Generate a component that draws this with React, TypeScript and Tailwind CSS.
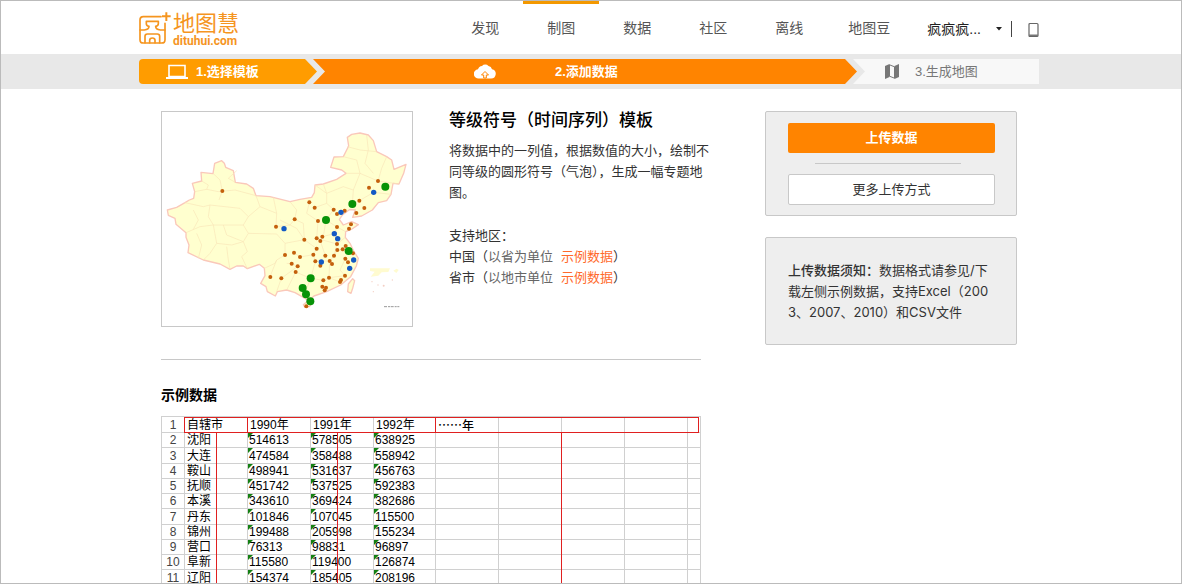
import React from "react";
import {clsx} from "clsx";

const NAV = ["发现", "制图", "数据", "社区", "离线"];

const YEARS = ["1990年", "1991年", "1992年", "……年", "", "", "", ""];

const ROWS = [
  ["沈阳", "514613", "578505", "638925"],
  ["大连", "474584", "358488", "558942"],
  ["鞍山", "498941", "531637", "456763"],
  ["抚顺", "451742", "537525", "592383"],
  ["本溪", "343610", "369424", "382686"],
  ["丹东", "101846", "107045", "115500"],
  ["锦州", "199488", "205998", "155234"],
  ["营口", "76313", "98831", "96897"],
  ["阜新", "115580", "119400", "126874"],
  ["辽阳", "154374", "185405", "208196"],
];

const SMALL_DOTS = [
  [187, 243], [448, 277], [464, 293], [404, 328], [348, 350], [474, 333], [521, 299], [531, 312],
  [554, 302], [598, 272], [613, 294], [589, 309], [627, 233], [654, 213], [573, 343], [567, 356],
  [531, 351], [433, 389], [470, 385], [487, 380], [481, 393], [470, 416], [531, 402], [532, 420],
  [548, 418], [557, 408], [579, 430], [375, 435], [402, 428], [420, 441], [460, 434], [496, 437],
  [522, 437], [466, 454], [509, 453], [516, 462], [481, 467], [556, 446], [564, 457], [395, 461],
  [413, 469], [407, 486], [331, 501], [364, 505], [507, 503], [490, 511], [555, 497], [543, 510],
  [540, 516], [487, 530], [498, 533], [494, 541], [439, 589],
];

const MEDIUM_DOTS = [
  [641, 247], [543, 307], [372, 356], [523, 371], [533, 386], [484, 456], [581, 450], [569, 475],
];

const LARGE_DOTS = [
  [676, 230], [577, 282], [498, 330], [566, 423], [452, 505], [428, 534], [438, 553], [451, 574],
];

function Logo() {
  return (
    <a aria-label="地图慧" className="flex items-start text-[#f5951f]" href="#">
      <svg className="mt-[11px] h-[33px] w-8" fill="none" viewBox="0 0 96 99">
        <g stroke="currentColor" strokeLinecap="round" strokeLinejoin="round" strokeWidth="5">
          <path d="M66 14H13Q3 14 3 24V83Q3 93 13 93H68Q78 93 78 83V34" />
          <path d="M3 54H16Q30 53 30 43Q22 41 22 35V28H58V35Q58 41 50 43Q50 53 64 54H78" />
          <path d="M18 92V73Q18 66 25 66H55Q62 66 62 73V92" />
          <path d="M32 92V85Q32 78 40 78Q48 78 48 85V92" />
        </g>
        <path d="M82 1V27M69 13H95" stroke="currentColor" strokeWidth="6" />
      </svg>
      <span className="mt-[11px] ml-0.5 flex flex-col">
        <span className="text-[22px] leading-[23px]">地图慧</span>
        <span className="font-[Roboto] text-xs leading-3 font-bold">dituhui.com</span>
      </span>
    </a>
  );
}

function Header() {
  return (
    <header className="mx-auto flex h-[53px] max-w-[900px] items-start justify-between">
      <Logo />
      <nav className="flex text-sm text-[#555]">
        {NAV.map((item) => (
          <a
            key={item}
            className={clsx(
              "h-[53px] w-[76px] border-t-3 text-center leading-12",
              item === "制图" ? "border-[#f39800]" : "border-transparent",
            )}
            href="#"
          >
            {item}
          </a>
        ))}
        <a className="w-[84px] border-t-3 border-transparent text-center leading-12" href="#">
          地图豆
        </a>
        <button
          className="ml-4 flex items-center border-t-3 border-transparent leading-12 text-[#222]"
          type="button"
        >
          疯疯疯...
          <svg className="ml-3.5 h-1 w-2" viewBox="0 0 8 4">
            <path d="M1 0h6L4 3.5z" fill="#222" />
          </svg>
        </button>
        <span className="mt-5 ml-2 h-4 w-px bg-[#444]" />
        <a aria-label="手机版" className="mt-[21px] ml-4" href="#">
          <svg className="h-4 w-[11px]" viewBox="0 0 11 16">
            <path
              d="M2 1.500h7q1 0 1 1v11q0 1-1 1H2q-1 0-1-1v-11q0-1 1-1z"
              fill="none"
              stroke="#666"
              strokeWidth="1.2"
            />
            <path d="M1 12.500h9v1.500H1z" fill="#777" />
          </svg>
        </a>
      </nav>
    </header>
  );
}

function Steps() {
  return (
    <div className="bg-[#e8e8e8] py-[5px] pr-1">
      <ol className="mx-auto flex h-[25px] max-w-[900px] text-[13px]">
        <li className="flex w-[178px] items-center gap-2 rounded-l-sm bg-[#ff9c00] pl-[27px] font-bold text-white [clip-path:polygon(0_0,calc(100%-12px)_0,100%_50%,calc(100%-12px)_100%,0_100%)]">
          <svg className="h-4 w-[22px]" viewBox="0 0 22 16">
            <path d="M3 1.5h16v11H3z" fill="none" stroke="#fff" strokeWidth="1.6" />
            <path d="M0 13h22v2H0z" fill="#fff" />
          </svg>
          1.选择模板
        </li>
        <li className="-ml-1 flex flex-1 items-center gap-[59px] bg-[#ff8400] pl-[161px] font-bold text-white [clip-path:polygon(0_0,calc(100%-12px)_0,100%_50%,calc(100%-12px)_100%,0_100%,12px_50%)]">
          <svg className="h-4 w-[22px]" viewBox="0 0 22 16">
            <path
              d="M5 14.500A4.500 4.500 0 0 1 4 5.200A4.500 4.500 0 0 1 8 2A4.500 4.500 0 0 1 14.500 2A4.300 4.300 0 0 1 18 5.200A4.700 4.700 0 0 1 17 14.500z"
              fill="#fff"
            />
            <path
              d="M11 7.500l3.500 3.500h-2.200V14H9.700v-3H7.500z"
              fill="none"
              stroke="#ff8400"
              strokeWidth="1"
            />
          </svg>
          2.添加数据
        </li>
        <li className="-ml-1 flex w-[186px] items-center gap-4 bg-[#f8f8f8] pl-8 text-[#777] [clip-path:polygon(0_0,100%_0,100%_100%,0_100%,12px_50%)]">
          <svg className="h-[15px] w-[14px]" viewBox="0 0 14 15">
            <path d="M0 2L4.500 0V13L0 15z" fill="#777" />
            <path d="M4.500 .8L9.500 2.800V14.200L4.500 12.200z" fill="none" stroke="#777" />
            <path d="M9.500 2L14 0V13L9.500 15z" fill="#777" />
          </svg>
          3.生成地图
        </li>
      </ol>
    </div>
  );
}

function ChinaMap() {
  return (
    <svg aria-label="等级符号地图" className="block w-full" role="img" viewBox="6 6 750 642">
      <g fill="#ffffcf" stroke="#fac8ba" strokeLinejoin="round" strokeWidth="4">
        <path d="M22 300L50 292L75 278L88 270L101 265L104 245L97 220L125 213L123 187L159 191L164 160L185 152L193 160L197 172L220 182L226 217L260 222L280 235L288 257L330 260L390 275L420 268L455 262L463 248L465 225L490 222L530 208L558 190L545 180L512 172L522 141L550 140L566 108L562 82L575 73L600 69L625 75L640 92L650 125L680 140L695 150L702 178L738 163L731 190L717 222L699 220L693 253L680 272L655 278L637 300L605 318L578 322L586 300L568 299L548 314L538 328L550 345L575 335L595 344L576 357L557 365L556 382L570 400L582 425L595 445L589 468L572 500L542 525L500 545L462 558L446 572L430 562L405 548L380 540L352 545L346 558L322 545L318 530L302 520L315 497L313 475L298 463L262 476L250 468L230 468L210 478L180 462L130 450L84 428L87 405L78 382L78 368L48 343L45 325L25 316Z" />
        <path d="M563 545L565 522L578 506L584 512L578 535L573 550Z" />
        <path d="M430 584L440 576L456 580L448 590L435 592Z" />
      </g>
      <g fill="none" stroke="#f9e6b8" strokeWidth="2">
        <path d="M104 245L140 238L175 245L225 240L288 257M160 191L180 210L187 243L177 270M75 278L130 290L150 285L240 295L265 320L250 345L265 370L350 372M78 368L120 350L160 345L250 345M150 285L145 320L160 345M265 370L250 395L262 425L245 440L262 476M160 345L170 400L150 430L130 450M170 400L215 405L250 395M288 257L300 290L350 310L348 350L390 345L404 328L430 340L433 389M300 290L265 320M350 372L375 400L375 435L350 450L330 500M313 475L345 460L350 450M375 400L433 389L470 416L460 434L420 441L402 428M390 275L410 300L404 328M448 277L440 310L474 333L470 385L531 402L556 382M464 293L500 280L521 299L498 330L531 351L557 365M465 225L500 250L550 230L580 240L577 282L598 272L641 247L693 253M550 140L590 150L600 190L654 213L717 222M600 190L580 240M562 110L600 120L650 125M558 190L600 190M460 434L466 454L452 505L407 486L380 540M466 454L509 453L522 437L532 420L579 430M509 453L507 503L540 516M452 505L490 511L507 503L555 497M452 505L430 562M556 446L540 480L555 497M413 469L364 505L350 545M200 410L205 450L210 478M190 345L200 375L250 395" />
        <path d="M230 182L205 205L226 217M125 213L145 225L140 238M340 262L350 310M360 330L410 355L433 389M490 222L500 250L500 280M620 75L625 120L615 160L640 190M680 140L665 175L654 213M490 380L498 330M531 351L523 371L487 380M481 393L496 437M531 402L522 437M380 460L395 461L413 469M100 300L115 330L100 358M110 370L125 405L115 445" />
      </g>
      <path d="M630 475H690L685 486L665 487L655 497L632 500L644 485L630 483Z" fill="#fffbd0" />
      <path d="M700 482l10-6 6 4-7 9z" fill="#fffbd0" />
      <g fill="#f3cfc4">
        <circle cx="636" cy="515" r="2" />
        <circle cx="654" cy="525" r="2" />
        <circle cx="671" cy="527" r="3" />
        <circle cx="697" cy="510" r="2" />
        <circle cx="640" cy="545" r="2" />
      </g>
      <path d="M672 590H718" stroke="#999" strokeDasharray="9 3 6 2" strokeWidth="3" />
      {SMALL_DOTS.map(([x, y]) => (
        <circle key={`${x}-${y}`} cx={x} cy={y} fill="#c4600c" r="6" />
      ))}
      {MEDIUM_DOTS.map(([x, y]) => (
        <circle key={`${x}-${y}`} cx={x} cy={y} fill="#1359c4" r="8" />
      ))}
      {LARGE_DOTS.map(([x, y]) => (
        <circle key={`${x}-${y}`} cx={x} cy={y} fill="#079307" r="12" />
      ))}
    </svg>
  );
}

function Template() {
  return (
    <div className="grid grid-cols-[252px_1fr] gap-9">
      <div className="border border-[#c8c8c8]">
        <ChinaMap />
      </div>
      <div className="-mr-2 text-[13px] leading-[21px] text-[#333]">
        <h1 className="mb-[9px] text-[17px] leading-5 font-medium text-black">
          等级符号（时间序列）模板
        </h1>
        <p>将数据中的一列值，根据数值的大小，绘制不同等级的圆形符号（气泡），生成一幅专题地图。</p>
        <h2 className="mt-[22px]">支持地区：</h2>
        <p>
          中国（<span className="text-[#666]">以省为单位</span>
          <a className="ml-2 text-[#ff6a2b]" href="#">
            示例数据
          </a>
          ）
        </p>
        <p>
          省市（<span className="text-[#666]">以地市单位</span>
          <a className="ml-2 text-[#ff6a2b]" href="#">
            示例数据
          </a>
          ）
        </p>
      </div>
    </div>
  );
}

function Cell({children}: {children?: React.ReactNode}) {
  return (
    <td className="relative border border-[#d0d0d0] p-0 pl-px">
      {children ? (
        <>
          <i className="absolute top-0 left-0 border-t-5 border-r-5 border-t-[#138013] border-r-transparent" />
          {children}
        </>
      ) : null}
    </td>
  );
}

function SampleTable() {
  return (
    <div className="relative">
      <table className="w-full table-fixed border-collapse border border-[#c8c8c8] text-left text-xs leading-[14px] text-black">
        <colgroup>
          <col className="w-[23px]" />
          <col className="w-[63px]" />
          <col className="w-[63px]" />
          <col className="w-[63px]" />
          <col className="w-[62px]" />
          <col className="w-[63px]" />
          <col className="w-[63px]" />
          <col className="w-[63px]" />
          <col className="w-[63px]" />
          <col />
        </colgroup>
        <thead>
          <tr className="h-4">
            <th className="border border-[#d0d0d0] p-0 pt-px text-center font-normal text-[#444]">
              1
            </th>
            <th className="border border-[#d0d0d0] p-0 pt-px pl-0.5 font-normal">自辖市</th>
            {YEARS.map((year, i) => (
              <th
                key={i}
                className={clsx(
                  "border border-[#d0d0d0] p-0 pt-px pl-0.5",
                  year.startsWith("…") ? "font-['Noto_Sans_CJK_SC'] font-medium" : "font-normal",
                )}
              >
                {year}
              </th>
            ))}
          </tr>
        </thead>
        <tbody>
          {ROWS.map(([city, ...values], i) => (
            <tr key={city} className="h-[15px] nth-[4n+2]:h-4">
              <td className="border border-[#d0d0d0] p-0 text-center text-[#444]">{i + 2}</td>
              <td className="border border-[#d0d0d0] p-0 pl-0.5">{city}</td>
              {YEARS.map((_, j) => (
                <Cell key={j}>{values[j]}</Cell>
              ))}
            </tr>
          ))}
        </tbody>
      </table>
      {/* red guides over the header row and the data columns */}
      <div className="absolute top-px right-0.5 left-[23px] flex h-4 border border-[#e02020]">
        <span className="w-[63px] border-r border-[#e02020]" />
        <span className="w-[188px] border-r border-[#e02020]" />
      </div>
      <span className="absolute top-[17px] bottom-0 left-[55px] w-px bg-[#e02020]" />
      <span className="absolute top-[17px] bottom-0 left-[176px] w-px bg-[#e02020]" />
      <span className="absolute top-[17px] bottom-0 left-[400px] w-px bg-[#e02020]" />
    </div>
  );
}

function Sidebar() {
  return (
    <aside className="flex w-[252px] flex-col gap-[21px] text-[13px] text-[#333]">
      <section className="flex flex-col rounded-xs border border-[#c8c8c8] bg-[#eee] pt-[11px] pr-[21px] pb-2.5 pl-[22px]">
        <button className="h-[30px] rounded-xs bg-[#ff8400] font-bold text-white" type="button">
          上传数据
        </button>
        <hr className="my-2.5 mr-[34px] ml-[27px] border-[#c8c8c8]" />
        <button className="h-[31px] rounded-xs border border-[#c8c8c8] bg-white" type="button">
          更多上传方式
        </button>
      </section>
      <section className="rounded-xs border border-[#c8c8c8] bg-[#eee] px-[22px] pt-[22px] pb-[21px]">
        <p className="font-['Inter','Noto_Sans_CJK_SC',sans-serif] leading-[21px] break-all">
          <strong className="font-medium">上传数据须知：</strong>
          数据格式请参见/下载左侧示例数据，支持Excel（2003、2007、2010）和CSV文件
        </p>
      </section>
    </aside>
  );
}

export default function App() {
  return (
    <div
      className="h-screen overflow-hidden border border-[#bbb] bg-white font-['Liberation_Sans','Noto_Sans_CJK_SC',sans-serif]"
      lang="zh-CN"
    >
      <div className="pr-1">
        <Header />
      </div>
      <Steps />
      <div className="pr-1">
        <main className="mx-auto flex max-w-[900px] items-start justify-between gap-16 px-[22px] pt-[22px]">
          <div className="min-w-0 flex-1">
            <Template />
            <hr className="mt-8 border-[#c8c8c8]" />
            <h2 className="mt-[25px] mb-[11px] text-sm leading-5 font-bold text-black">示例数据</h2>
            <SampleTable />
          </div>
          <Sidebar />
        </main>
      </div>
    </div>
  );
}
